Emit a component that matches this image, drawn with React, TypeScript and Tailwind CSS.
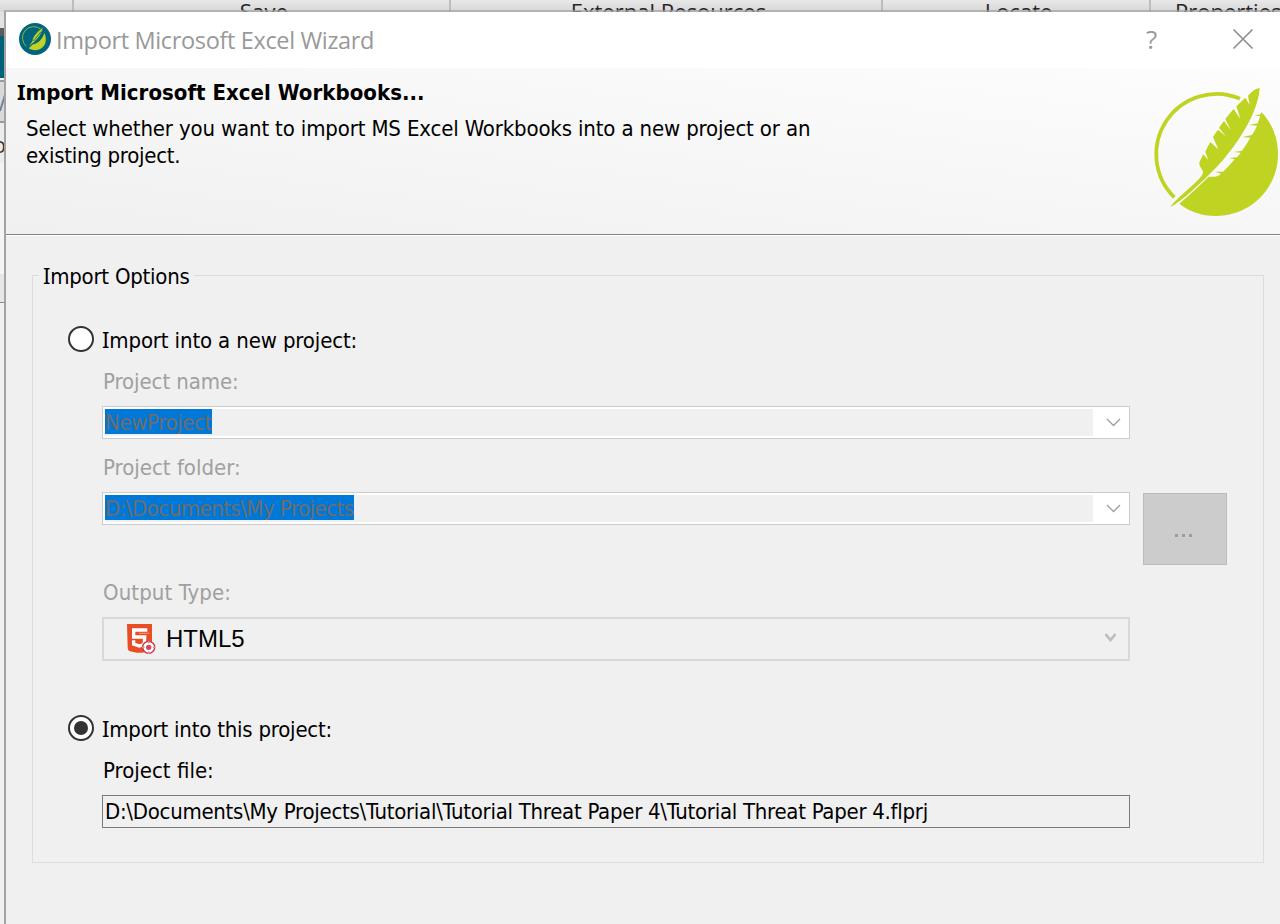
import type { ReactNode } from "react";

const dlg = "font-['DejaVu_Sans_Condensed','DejaVu_Sans',sans-serif] text-[22px] leading-[27px] whitespace-nowrap";

function Text({ children, className = "" }: { children: ReactNode; className?: string }) {
  return <div className={`${dlg} ${className}`}>{children}</div>;
}

function AppIcon() {
  return (
    <svg width="32" height="32" viewBox="0 0 96 96" className="mb-[2px] shrink-0">
      <circle cx="48" cy="48" r="48" fill="#00657d" />
      <path d="M66 19 A33 33 0 0 0 22 70" fill="none" stroke="#a9c523" strokeWidth="2.5" />
      <path d="M76 30 C86 50 81 78 50 82 C42 82 34 80 29 76 L42 64 C58 62 70 48 76 30 Z" fill="#bfd322" />
      <path d="M73 13 C60 20 40 40 40 53 L28 72 L46 57 C58 47 69 32 73 13 Z" fill="#bfd322" stroke="#00657d" strokeWidth="2" />
      <path d="M66 26 L44 54" stroke="#00657d" strokeWidth="2.5" />
    </svg>
  );
}

function FeatherLogo() {
  return (
    <svg width="130" height="130" viewBox="90 258 390 390" className="shrink-0" fill="#bfd322">
      <path d="M360 296 A181 181 0 0 0 163 592" fill="none" stroke="#bfd322" strokeWidth="11" />
      <path d="M178 611 C208 634 244 648 288 648 C392 648 474 565 474 462 C474 414 457 371 425 337 L421 343 L403 348 L420 348 C418 356 416 363 413 370 L387 375 L411 377 C407 387 402 396 396 405 L367 411 L391 413 C383 427 375 440 366 452 L342 456 L362 458 C358 464 354 468 350 472 L328 474 L344 478 C334 490 322 504 309 515 L284 515 L303 521 C295 530 283 531 266 530 C238 557 210 584 178 611 Z" />
      <path d="M419 264 C408 265 395 274 384 287 L389 315 L376 293 L349 319 L361 356 L341 327 C332 337 324 347 316 357 L332 391 L312 363 C307 370 301 377 297 384 L318 409 L294 389 C288 396 283 404 279 411 L295 448 L271 426 C265 436 260 446 256 456 L265 480 L250 463 C246 472 241 480 238 488 C237 501 248 505 249 518 C245 531 231 543 215 558 C192 579 168 599 150 621 C170 612 194 592 216 572 C255 537 284 509 309 480 C350 431 383 380 402 333 C411 311 418 286 419 264 Z" />
    </svg>
  );
}

function Html5Icon() {
  return (
    <svg width="30" height="32" viewBox="0 0 90 96" className="shrink-0">
      <path d="M3 3 H78 V72 Q78 84 68 85 L48 89 H32 L12 85 Q5 83 5 72 Z" fill="#e84e26" />
      <path d="M64 21 H23 V42 H56 L55 64 L40 69 L23 63 V52" fill="none" stroke="#fff" strokeWidth="10" />
      <path d="M39 31 H70" stroke="#f58b64" strokeWidth="4" />
      <circle cx="68" cy="73" r="18" fill="#fff" stroke="#c73149" strokeWidth="4" />
      <circle cx="68" cy="73" r="8" fill="#d1495d" />
      <path d="M68 53 V61 M68 85 V93 M48 73 H56 M80 73 H88" stroke="#e58a96" strokeWidth="4" />
    </svg>
  );
}

function Combo({ value, spacing }: { value: string; spacing: string }) {
  return (
    <div className="flex h-[33px] w-[1028px] items-center border border-[#cccccc] bg-white pl-[2px]">
      <div className="h-[27px] w-[988px] bg-[#f0f0f0]">
        <div className={`h-[25px] w-fit bg-[#0078d7] text-[#6d6d6d] ${dlg} ${spacing}`}>{value}</div>
      </div>
      <svg width="15" height="9" viewBox="0 0 15 9" className="ml-[13px]" fill="none" stroke="#9d9d9d" strokeWidth="1.3">
        <path d="M1 1 L7.5 7.5 L14 1" />
      </svg>
    </div>
  );
}

function Radio({ checked = false }: { checked?: boolean }) {
  return (
    <div className="mr-2 flex size-[26px] shrink-0 items-center justify-center rounded-full border-2 border-[#333333] bg-white">
      {checked && <div className="size-[14px] rounded-full bg-[#333333]" />}
    </div>
  );
}

const ribbon = "h-3 border-l-2 border-[#bcbcbc] font-['Open_Sans',sans-serif] text-[22px] leading-[22px] whitespace-nowrap text-[#262626] overflow-hidden text-center";

export default function App() {
  return (
    <div className="relative h-[924px] w-[1280px] overflow-hidden bg-[#f0f0f0]">
      <div className="flex h-3 overflow-hidden bg-linear-to-b from-[#e8e8e8] to-[#d6d6d6]">
        <div className="w-[72px]" />
        <div className={`${ribbon} w-[377px] pl-[5px] tracking-[0.2px]`}>Save</div>
        <div className={`${ribbon} w-[432px] pl-[5px]`}>External Resources</div>
        <div className={`${ribbon} w-[268px] pl-[5px]`}>Locate</div>
        <div className={`${ribbon} w-[131px] pl-[24px]`}>Properties</div>
      </div>
      <div className="flex w-[6px] flex-col overflow-hidden">
        <div className="h-4 bg-[#e2e2e2]" />
        <div className="h-2 bg-[#5c5c5c]" />
        <div className="h-[42px] bg-[#00627a]" />
        <div className="h-[2px] bg-[#f2f2f2]" />
        <div className="h-[43px] border-y-2 border-[#9a9a9a] bg-[#d9d9d9]">
          <svg width="5" height="39" viewBox="0 0 5 39">
            <path d="M0 29 L5 13" stroke="#70809a" strokeWidth="2" />
          </svg>
        </div>
        <div className="flex h-10 justify-end bg-[#ececec]">
          <div className="font-['Open_Sans',sans-serif] text-[22px] leading-[42px] text-[#333333]">o</div>
        </div>
        <div className="h-[111px] bg-[#f4f4f4]" />
        <div className="h-7 bg-[#e6e6e6]" />
        <div className="h-px bg-[#8c8c8c]" />
        <div className="h-[621px] bg-[#f0f0f0]" />
      </div>

      <div className="absolute top-[10px] left-1 flex h-[914px] w-[1276px] flex-col border-t-2 border-l-2 border-t-[#a3a3a3]/70 border-l-[#a3a3a3] bg-[#f0f0f0] bg-clip-padding text-black">
        <div className="flex h-14 shrink-0 items-center bg-white pl-[13px] text-[#999999]">
          <AppIcon />
          <div className="ml-[5px] w-[1090px] font-['Open_Sans',sans-serif] text-[23.5px] leading-8 tracking-[-0.35px] whitespace-nowrap">Import Microsoft Excel Wizard</div>
          <div className="mb-[2px] w-[86px] font-['Open_Sans',sans-serif] text-[26px] leading-8 font-medium">?</div>
          <svg width="22" height="22" viewBox="0 0 22 22" className="mb-[2px]" stroke="#8f8f8f" strokeWidth="1.7">
            <path d="M1.5 1.5 L20.5 20.5 M20.5 1.5 L1.5 20.5" />
          </svg>
        </div>

        <div className="flex h-[168px] shrink-0 border-b border-white bg-linear-to-bl from-[#fdfdfd] to-[#f0f0f0]">
          <div className="flex h-[167px] w-full justify-between border-b border-[#838383]">
            <div className="pt-[10px] pl-[11px]">
              <Text className="font-bold tracking-[0.03px] first-letter:font-['Noto_Sans']">Import Microsoft Excel Workbooks...</Text>
              <div className="pt-[9px] pl-[9px]">
                <Text className="tracking-[-0.15px]">Select whether you want to import MS Excel Workbooks into a new project or an</Text>
                <Text className="tracking-[-0.27px]">existing project.</Text>
              </div>
            </div>
            <div className="pt-[18px]">
              <FeatherLogo />
            </div>
          </div>
        </div>

        <fieldset className="mt-[24px] ml-[26px] h-[603px] w-[1232px] border border-[#dcdcdc] pl-[35px]">
          <legend className={`${dlg} -ml-[29px] px-1 pt-[2px] pb-px tracking-[-0.24px] first-letter:font-['Noto_Sans']`}>Import Options</legend>
          <div className="flex pt-[35px]">
            <Radio />
            <Text className="tracking-[-0.14px] first-letter:font-['Noto_Sans']">Import into a new project:</Text>
          </div>
          <div className="pl-[34px]">
            <Text className="mt-[14px] pl-px tracking-[-0.08px] text-[#a0a0a0]">Project name:</Text>
            <div className="mt-[11px]"><Combo value="NewProject" spacing="tracking-[-0.38px]" /></div>
            <Text className="mt-[15px] pl-px text-[#a0a0a0]">Project folder:</Text>
            <div className="mt-[11px] flex items-start">
              <Combo value={"D:\\Documents\\My Projects"} spacing="tracking-[-0.52px]" />
              <div className="mt-px ml-[13px] flex h-[72px] w-[84px] items-center justify-center gap-1 border border-[#bcbcbc] bg-[#cccccc] pt-[13px] pr-[3px]">
                <div className="size-[3px] bg-[#9d9d9d]" />
                <div className="size-[3px] bg-[#9d9d9d]" />
                <div className="size-[3px] bg-[#9d9d9d]" />
              </div>
            </div>
            <Text className="mt-[14px] pl-px tracking-[0.1px] text-[#a0a0a0]">Output Type:</Text>
            <div className="mt-[11px] flex h-11 w-[1028px] items-center justify-between border-2 border-[#d9d9d9] pr-3 pl-[22px]">
              <div className="flex items-center">
                <Html5Icon />
                <div className="ml-[10px] font-['Liberation_Sans',sans-serif] text-[24px] leading-8">HTML5</div>
              </div>
              <svg width="11" height="9" viewBox="0 0 11 9" className="mb-[3px]" fill="none" stroke="#bdbdbd" strokeWidth="2.6">
                <path d="M0.5 1 L5.5 7 L10.5 1" />
              </svg>
            </div>
          </div>
          <div className="flex pt-[54px]">
            <Radio checked />
            <Text className="tracking-[-0.22px] first-letter:font-['Noto_Sans']">Import into this project:</Text>
          </div>
          <div className="pl-[34px]">
            <Text className="mt-[14px] pl-px">Project file:</Text>
            <div className="mt-[11px] h-[33px] w-[1028px] border border-[#7a7a7a] pt-[2px] pl-[2px]">
              <Text className="tracking-[-0.275px]">{"D:\\Documents\\My Projects\\Tutorial\\Tutorial Threat Paper 4\\Tutorial Threat Paper 4.flprj"}</Text>
            </div>
          </div>
        </fieldset>
      </div>
    </div>
  );
}
